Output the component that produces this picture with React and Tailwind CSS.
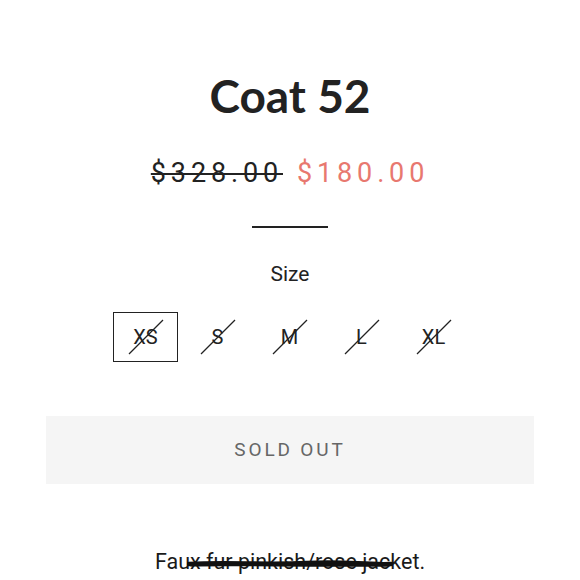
import React from "react";

const sizes = ["XS", "S", "M", "L", "XL"];

export default function App() {
  return (
    <div className="w-[580px] h-[580px] bg-white overflow-hidden flex flex-col items-center text-[#222]" style={{ fontFamily: "Roboto, 'Liberation Sans', sans-serif" }}>
      <h1 className="mt-[68px] text-[46px] leading-[56px] font-bold text-[#222]" style={{ fontFamily: "Lato, 'Liberation Sans', sans-serif" }}>
        Coat 52
      </h1>
      <div className="mt-[33px] flex items-center gap-[14px] text-[27px] leading-[32px] tracking-[0.18em]">
        <span className="line-through decoration-[2px] text-[#222]">$328.00</span>
        <span className="text-[#e8786f]">$180.00</span>
      </div>
      <div className="mt-[37px] w-[76px] h-[2px] bg-[#222]" />
      <div className="mt-[34px] text-[21px] leading-[24px]">Size</div>
      <div className="mt-[26px] flex gap-[7px] pr-[1px]">
        {sizes.map((s, i) => (
          <div
            key={s}
            className={
              "relative w-[65px] h-[50px] flex items-center justify-center text-[20px] " +
              (i === 0 ? "border-[1.5px] border-[#222]" : "border-[1.5px] border-transparent")
            }
          >
            <span>{s}</span>
            <svg className="absolute left-1/2 top-1/2 -translate-x-1/2 -translate-y-1/2" width="36" height="36" viewBox="0 0 36 36">
              <line x1="1" y1="35" x2="35" y2="1" stroke="#222" strokeWidth="1.2" />
            </svg>
          </div>
        ))}
      </div>
      <div className="mt-[54px] w-[488px] h-[68px] bg-[#f5f5f5] flex items-center justify-center text-[19px] tracking-[0.15em] text-[#666]">
        SOLD OUT
      </div>
      <div className="relative mt-[65px] text-[21.5px] leading-[26px] text-[#1a1a1a]">
        Faux fur pinkish/rose jacket.
        <svg className="absolute left-[32px] top-[10px]" width="206" height="10" viewBox="0 0 206 10">
          <path d="M2 5 C40 3, 80 6, 120 4 S176 6, 204 5" stroke="#111" strokeWidth="4.5" fill="none" strokeLinecap="round" />
          <path d="M4 6 C60 5, 120 7, 202 6" stroke="#111" strokeWidth="3" fill="none" strokeLinecap="round" />
        </svg>
      </div>
    </div>
  );
}
